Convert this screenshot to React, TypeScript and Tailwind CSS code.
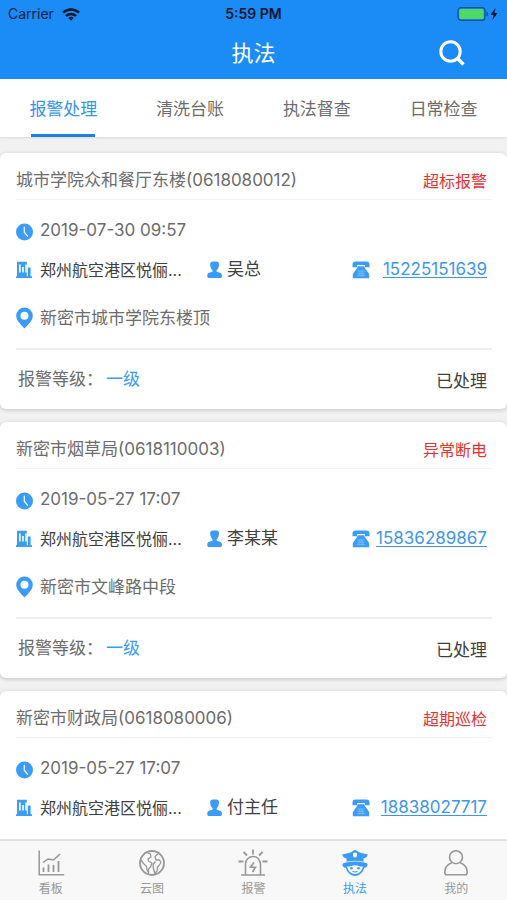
import React from 'react';

const tabs = ['报警处理', '清洗台账', '执法督查', '日常检查'];

const alarms = [
  {
    name: '城市学院众和餐厅东楼(0618080012)',
    type: '超标报警',
    time: '2019-07-30 09:57',
    company: '郑州航空港区悦俪...',
    person: '吴总',
    phone: '15225151639',
    address: '新密市城市学院东楼顶',
    level: '一级',
    status: '已处理',
  },
  {
    name: '新密市烟草局(0618110003)',
    type: '异常断电',
    time: '2019-05-27 17:07',
    company: '郑州航空港区悦俪...',
    person: '李某某',
    phone: '15836289867',
    address: '新密市文峰路中段',
    level: '一级',
    status: '已处理',
  },
  {
    name: '新密市财政局(0618080006)',
    type: '超期巡检',
    time: '2019-05-27 17:07',
    company: '郑州航空港区悦俪...',
    person: '付主任',
    phone: '18838027717',
  },
];

type Alarm = {
  name: string;
  type: string;
  time: string;
  company: string;
  person: string;
  phone: string;
  address?: string;
  level?: string;
  status?: string;
};

function ClockIcon() {
  return (
    <svg viewBox="0 0 18 18" className="mt-[2px] h-[18px] w-[18px] shrink-0">
      <circle cx="8.500" cy="9" r="8.500" fill="#3b9cf8" />
      <path d="M8.300 4v5.200l3.200 4" fill="none" stroke="#fff" strokeWidth="1.200" strokeLinecap="round" />
    </svg>
  );
}

function BuildingIcon() {
  return (
    <svg viewBox="0 0 18 18" className="h-[18px] w-[18px] shrink-0">
      <path d="M1 .8h9.800v14.400h1V6.500h2.800v8.700H16V17H0v-1.800h1z" fill="#3b9cf8" />
      <path d="M3 3.500h1.700v8H3zM6.200 6h1.600v5.500H6.200zM9.300 3.500h1.500v8H9.300z" fill="#fff" />
    </svg>
  );
}

function PersonIcon() {
  return (
    <svg viewBox="0 0 16 18" className="h-[18px] w-4 shrink-0">
      <path
        d="M3.200 2.800C3.200 1.200 4.300.6 7.600.6S12 1.200 12 2.800c0 3-.6 5.200-2.300 6.500v1.500c2 .6 5.200.8 5.200 3.500v1.200c0 .9-.5 1.500-1.500 1.500H1.800c-1 0-1.500-.6-1.500-1.500v-1.200c0-2.700 3.200-2.900 5.200-3.500V9.300C3.800 8 3.200 5.800 3.200 2.800z"
        fill="#3b9cf8"
      />
    </svg>
  );
}

function PhoneIcon() {
  return (
    <svg viewBox="0 0 18 18" className="h-[18px] w-[18px] shrink-0">
      <path d="M3.500 .5h11c2 0 3 1.200 3 3v2.700h-4.700V4H5.200v2.200H.5V3.500c0-1.800 1-3 3-3z" fill="#3b9cf8" />
      <path d="M6 5.200h6l1.200 2.300 3.300 4.500c.5.8.7 1.300.7 2v3.200H.8V14c0-.7.2-1.200.7-2l3.300-4.500z" fill="#3b9cf8" />
      <path
        d="M5.500 10h7M5.200 12.300h7.600M4.800 14.500h8.400M7.200 9.500v6M9 9.500v6M10.800 9.500v6"
        stroke="#8cc5fb"
        strokeWidth=".6"
      />
    </svg>
  );
}

function PinIcon() {
  return (
    <svg viewBox="0 0 18 22" className="mb-[2px] h-[22px] w-[18px] shrink-0">
      <path
        d="M8.500 .5A8.300 8.300 0 0 1 16.800 8.800c0 4.200-3.800 8.200-8.300 12.700C4 17 .2 13 .2 8.800A8.300 8.300 0 0 1 8.500 .5zm0 4.300a4 4 0 1 0 0 8 4 4 0 0 0 0-8z"
        fill="#3b9cf8"
      />
    </svg>
  );
}

function ChartIcon() {
  return (
    <svg viewBox="0 0 28 28" className="h-7 w-7" fill="none" stroke="currentColor" strokeWidth="1.500">
      <path d="M2.200 1.500v24.300h25" />
      <path d="M6 13.500l5-3.500 5.500 1 6.500-6" />
      <path d="M6.500 18.500v4.500M11.500 15.500V23M16.500 16v7M21.500 12v11" strokeWidth="1.800" />
    </svg>
  );
}

function GlobeIcon() {
  return (
    <svg viewBox="0 0 28 28" className="h-7 w-7" fill="none" stroke="currentColor" strokeWidth="1.300" strokeLinejoin="round">
      <circle cx="14" cy="14" r="12" strokeWidth="1.800" />
      <path d="M9 3.500l3.500 1.500.5 3-3 2 .5 2 3.500 2-1.500 4-2 2v4.500M3 11l2.500 3.500 3 3 .5 3.500 2 3.500" />
      <path d="M20.500 4.500l-3.500 3 1 3.500 3.500 0 1.500 2.500-2 3-1.500 1.500-.5 4-2 2.500-1.500-4.500-.5-4.500 2.500-3" />
    </svg>
  );
}

function SirenIcon() {
  return (
    <svg viewBox="0 0 30 28" className="h-7 w-[30px]" fill="none" stroke="currentColor" strokeWidth="1.600">
      <path d="M3 26h24M7.500 26V15a7.500 7.500 0 0 1 15 0v11" />
      <path d="M15 .5v5M5.500 3l3.500 3.500M24.500 3L21 6.500M.5 12.500h5M24.500 12.500h5" strokeWidth="1.800" />
      <path d="M16 13.500l-3.500 4.700h5L14.500 23" />
    </svg>
  );
}

function PoliceIcon() {
  return (
    <svg viewBox="0 0 28 28" className="h-7 w-7">
      <path
        d="M14 .8l4.500 2.700 8.300 2c-.5 2.400-2 3.300-4.300 4.100v3.200c-5.500-1.300-11.500-1.300-17 0V9.600C3.200 8.800 1.700 7.900 1.200 5.500l8.300-2z"
        fill="currentColor"
      />
      <path d="M12 4.300l2-.8 2 .8v2.900l-2 1.600-2-1.600z" fill="#f8f8f8" />
      <path
        d="M4.800 13.600c5.500-1.500 12.900-1.500 18.400 0l1.500.5c2.500-.5 2.800 4.300-1.200 4.700C21.500 24 18 27 14 27S6.500 24 4.500 18.800c-4-.4-3.700-5.200-1.200-4.700z"
        fill="currentColor"
      />
      <path d="M6 17.500c3 .3 5-1.300 8-1.300s5 1.600 8 1.300c-1 4.500-4 7.500-8 7.500s-7-3-8-7.500z" fill="#f8f8f8" />
      <circle cx="10.500" cy="19.200" r="1.300" fill="currentColor" />
      <circle cx="17.500" cy="19.200" r="1.300" fill="currentColor" />
      <path d="M11.500 22.300c1.700.9 3.300.9 5 0" fill="none" stroke="currentColor" strokeWidth="1.100" />
    </svg>
  );
}

function MineIcon() {
  return (
    <svg viewBox="0 0 28 28" className="h-7 w-7" fill="none" stroke="currentColor" strokeWidth="1.600">
      <circle cx="14" cy="8.200" r="6.500" />
      <path d="M9.800 13.800C5.500 15.300 2.800 19 2.800 23.500c0 1.500.8 2.300 2.300 2.300h17.800c1.500 0 2.300-.8 2.300-2.300 0-4.500-2.700-8.200-7-9.700" />
    </svg>
  );
}

const navItems = [
  { label: '看板', icon: <ChartIcon /> },
  { label: '云图', icon: <GlobeIcon /> },
  { label: '报警', icon: <SirenIcon /> },
  { label: '执法', icon: <PoliceIcon />, active: true },
  { label: '我的', icon: <MineIcon /> },
];

function StatusBar() {
  return (
    <div className="grid h-7 grid-cols-3 items-center px-2 text-sm text-[#06203d]">
      <div className="flex items-center gap-2">
        <span>Carrier</span>
        <svg viewBox="0 0 18 13" className="h-[13px] w-[18px]" fill="none" stroke="#06162b" strokeWidth="2.400">
          <path d="M1 4.700a11.500 11.500 0 0 1 16 0M4 8a7.200 7.200 0 0 1 10 0" />
          <path d="M9 12.800L6.300 10a4 4 0 0 1 5.400 0z" fill="#06162b" stroke="none" />
        </svg>
      </div>
      <span className="text-center font-semibold text-[#06162b]">5:59 PM</span>
      <svg viewBox="0 0 44 16" className="h-4 w-11 justify-self-end">
        <rect x="3" y="1.700" width="27" height="12.600" rx="3" fill="none" stroke="#0d4f94" strokeWidth="1.200" />
        <rect x="4.300" y="3" width="24.400" height="10" rx="1.500" fill="#4cd964" />
        <path d="M31.500 6v4c1.200-.3 1.700-1 1.700-2s-.5-1.700-1.700-2z" fill="#0d4f94" />
        <path d="M40.500 2l-5 6.800h3L37.500 14l5-7h-3z" fill="#06162b" />
      </svg>
    </div>
  );
}

function AlarmCard({ alarm }: { alarm: Alarm }) {
  return (
    <article className="shrink-0 rounded-md bg-white pr-[15px] pl-4 text-[17px] text-[#6c6c6c] shadow-[0_1px_4px_rgba(0,0,0,0.2)]">
      <div className="flex h-[47px] items-center justify-between border-b border-[#f3f3f3] pt-[10px] pr-[5px]">
        <h2>{alarm.name}</h2>
        <span className="text-base text-[#e93030]">{alarm.type}</span>
      </div>

      <div className="pt-[11px] pr-[5px] pb-[9px]">
        <div className="flex h-10 items-center gap-[6px]">
          <ClockIcon />
          <time>{alarm.time}</time>
        </div>
        <div className="grid h-[38px] grid-cols-[191fr_145fr_135fr] items-center text-[#404040]">
          <div className="flex items-center gap-[6px]">
            <BuildingIcon />
            <span className="text-base whitespace-nowrap">{alarm.company}</span>
          </div>
          <div className="flex items-center gap-1">
            <PersonIcon />
            <span>{alarm.person}</span>
          </div>
          <div className="flex items-center justify-between">
            <PhoneIcon />
            <a href={`tel:${alarm.phone}`} className="text-[#3d96ee] underline underline-offset-2">
              {alarm.phone}
            </a>
          </div>
        </div>
        <div className="mt-[10px] flex h-10 items-center gap-[6px]">
          <PinIcon />
          <span>{alarm.address}</span>
        </div>
      </div>

      {alarm.level && (
        <div className="flex h-[61px] items-center justify-between border-t-2 border-[#efefef] pr-[5px] pl-[2px]">
          <p>
            报警等级：<span className="ml-[3px] text-[#3b9cf8]">{alarm.level}</span>
          </p>
          <span className="pt-1 text-[#404040]">{alarm.status}</span>
        </div>
      )}
    </article>
  );
}

export default function App() {
  return (
    <div className="flex h-screen flex-col overflow-hidden bg-[#f1f1f1] font-['Inter','Noto_Sans_CJK_SC',sans-serif]">
      <header className="shrink-0 bg-[#1b8bf6]">
        <StatusBar />
        <div className="grid h-[51px] grid-cols-[1fr_auto_1fr] items-center">
          <h1 className="col-start-2 text-[22px] text-white">执法</h1>
          <button type="button" aria-label="搜索" className="mr-[42px] mb-[2px] justify-self-end">
            <svg viewBox="0 0 26 26" className="h-[26px] w-[26px]" fill="none" stroke="#fff" strokeWidth="3">
              <circle cx="11.500" cy="11.500" r="9.700" />
              <path d="M18.300 18.300l6.200 6.200" strokeWidth="3.400" />
            </svg>
          </button>
        </div>
      </header>

      <nav className="grid shrink-0 grid-cols-4 bg-white shadow-[0_1px_2px_rgba(0,0,0,0.1)]">
        {tabs.map((tab, index) => (
          <button key={tab} type="button" className="flex h-[58px] flex-col items-center text-[17px]">
            <span className={index === 0 ? 'flex flex-1 items-center pt-[6px] text-[#3593ee]' : 'flex flex-1 items-center pt-[6px] text-[#6c6c6c]'}>
              {tab}
            </span>
            <span className={index === 0 ? 'h-[3px] w-16 bg-[#1b83e8]' : 'h-[3px] w-16'} />
          </button>
        ))}
      </nav>

      <main className="flex min-h-0 flex-1 flex-col gap-[13px] overflow-hidden pt-4">
        {alarms.map((alarm) => (
          <AlarmCard key={alarm.name} alarm={alarm} />
        ))}
      </main>

      {/* Bottom navigation */}
      <nav className="relative grid h-[61px] shrink-0 grid-cols-5 border-t-2 border-[#e2e2e2] bg-[#f8f8f8]">
        {navItems.map((item) => (
          <a
            key={item.label}
            href="#"
            className={
              item.active
                ? 'flex flex-col items-center gap-1 pt-2 text-xs text-[#3b9cf8]'
                : 'flex flex-col items-center gap-1 pt-2 text-xs text-[#989898]'
            }
          >
            {item.icon}
            <span>{item.label}</span>
          </a>
        ))}
      </nav>
    </div>
  );
}
